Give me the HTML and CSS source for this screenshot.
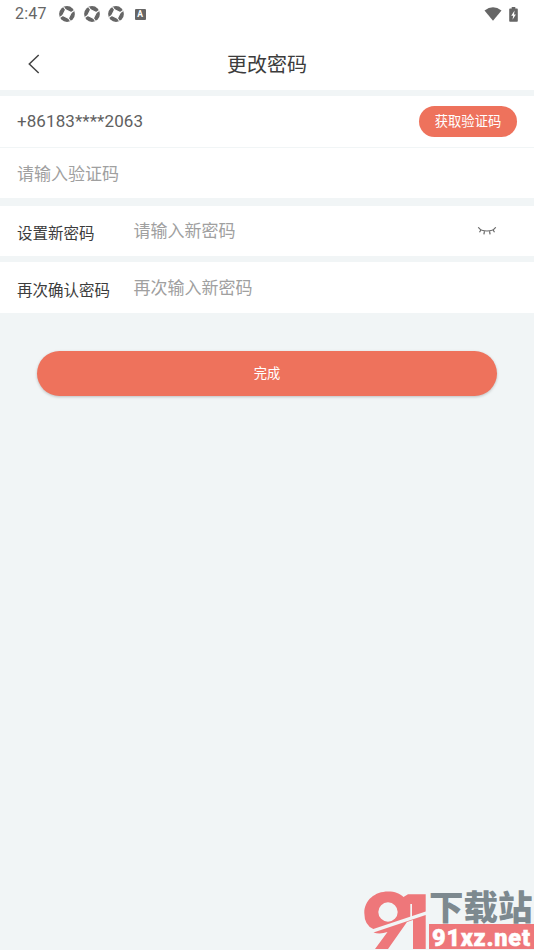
FILE: index.html
```html
<!DOCTYPE html>
<html lang="zh-CN">
<head>
<meta charset="UTF-8">
<title>更改密码</title>
<link rel="stylesheet" href="styles.css">
</head>
<body>
<div class="status">
  <span class="time">2:47</span>
  <svg class="ball" viewBox="0 0 16 16"><use href="#ball"/></svg>
  <svg class="ball" viewBox="0 0 16 16"><use href="#ball"/></svg>
  <svg class="ball" viewBox="0 0 16 16"><use href="#ball"/></svg>
  <span class="badge">A</span>
  <svg class="wifi" viewBox="0 0 18 14"><path d="M.5 3.6Q9-3 17.5 3.6L9 13.8Z"/></svg>
  <svg class="battery" viewBox="0 0 9 15"><path d="M2.700 0h3.600v1.600H8q.8 0 .8.8V14q0 .8-.8.8H1q-.8 0-.8-.8V2.400q0-.8.8-.8h1.700Z"/><path class="bolt" d="M5.600 3.500 2.200 8.700h2l-.7 4L6.900 7.500H5Z"/></svg>
  <svg class="defs"><defs><g id="ball"><circle cx="8" cy="8" r="7.900"/><path d="M6.500 3.500 12.500 6.500 9.500 12.500 3.500 9.500Z" fill="#fff" stroke="#fff" stroke-width=".8"/><path d="M7 4.500 4.500.8M11.500 7 15.200 4.500M9 11.500 11.500 15.200M4.500 9 .8 11.500" stroke="#fff" stroke-width="1.100"/></g></defs></svg>
</div>
<header class="header">
  <svg class="back" viewBox="0 0 12 20"><path d="M10.700 1 1.300 10l9.400 9"/></svg>
  <h1>更改密码</h1>
</header>
<main>
  <section class="row phone"><span>+86183****2063</span><button class="code">获取验证码</button></section>
  <section class="row verify"><span class="hint">请输入验证码</span></section>
  <section class="row create"><label>设置新密码</label><span class="hint">请输入新密码</span>
    <svg class="eye" viewBox="0 0 20 10"><path d="M1.300 1.200Q3.500 5 10 5T18.700 1.200M4.200 3.500 2.500 6.200M7.500 5l-.6 3.300M12.500 5l.6 3.300M15.800 3.500l1.700 2.700"/></svg>
  </section>
  <section class="row confirm"><label>再次确认密码</label><span class="hint">再次输入新密码</span></section>
  <button class="done">完成</button>
</main>
<div class="watermark">
  <svg class="mark" viewBox="0 0 62 59">
    <path fill-rule="evenodd" d="M.3 22C.3 9 11 .5 24 .5c7 0 12 2 15.500 5.500L44 3.300h17.700v17.200L9.300 38Q.3 34 .3 22ZM14.300 21a9.700 9.700 0 1 0 19.400 0a9.700 9.700 0 1 0-19.400 0Z"/>
    <path d="M9.500 41.500 61.700 24V58H49V29L43 31 24 58H11L23.500 41Q16 43.500 9.500 41.500Z"/>
    <path class="cut" d="M46.300 13h1.700v15h-1.700Z"/>
  </svg>
  <div class="site">
    <div class="station">下载站</div>
    <div class="domain"><svg viewBox="0 0 105 25"><text x="3" y="21.500" textLength="98" lengthAdjust="spacing">91xz.net</text></svg></div>
  </div>
</div>
</body>
</html>
```
FILE: styles.css
```css
* { box-sizing: border-box; }
body { margin: 0; height: 950px; overflow: hidden; background: #f1f5f6; color: #3c3c3c; font-family: Roboto, "Noto Sans CJK SC", sans-serif; }
button { border: 0; padding: 0 0 1px; color: #fff; background: #ee725c; font-family: inherit; }
.status { height: 28px; display: flex; align-items: center; padding: 0 15px; background: #fff; color: #666; }
.time { width: 44px; font-size: 16px; line-height: 28px; letter-spacing: .2px; }
.ball { width: 16px; height: 16px; margin-right: 8.500px; fill: #666; }
.badge { width: 11px; height: 11px; margin-left: 2px; border-radius: 1px; background: #666; color: #fff; font-size: 8.500px; font-weight: 700; line-height: 11px; text-align: center; }
.wifi { width: 18px; height: 14px; margin-left: auto; margin-right: 7px; fill: #666; }
.battery { width: 9px; height: 15px; margin-right: 1px; fill: #666; }
.battery .bolt { fill: #fff; }
.defs { width: 0; height: 0; }
.header { height: 62px; display: grid; grid-template-columns: 60px 1fr 60px; align-items: center; background: #fff; padding-top: 10px; }
.back { width: 12px; height: 20px; margin-left: 28px; fill: none; stroke: #444; stroke-width: 1.500; }
h1 { margin: 0; padding-top: 2px; font-size: 20px; line-height: 30px; font-weight: 400; text-align: center; }
main { display: flex; flex-direction: column; padding-top: 6px; }
.row { display: flex; align-items: center; height: 51px; padding: 0 17px; background: #fff; font-size: 17px; line-height: 26px; }
.phone { color: #606060; justify-content: space-between; padding-bottom: 1px; letter-spacing: .08px; }
.code { width: 98px; height: 31px; border-radius: 16px; font-size: 13.300px; letter-spacing: 0; }
.hint { color: #a0a0a0; padding-top: 2px; }
.verify { margin-top: 1px; height: 50px; }
.create { margin-top: 7.500px; height: 50.500px; }
.create .hint { padding-top: 1px; }
.confirm { margin-top: 6px; height: 50.500px; }
label { width: 116.500px; margin-top: 7px; font-size: 15.500px; line-height: 18px; }
.eye { width: 20px; height: 10px; margin-left: auto; margin-right: 20px; fill: none; stroke: #666; stroke-width: 1.200; }
.done { width: 460px; height: 44.500px; margin: 38.500px auto 0; border-radius: 23px; font-size: 13.300px; box-shadow: 0 1px 3px rgb(0 0 0 / 22%); }
.watermark { position: absolute; left: 364px; top: 891px; width: 170px; height: 59px; display: flex; gap: 3px; }
.mark { width: 62px; height: 59px; fill: #ee777a; }
.mark .cut { fill: #f1f5f6; }
.site { width: 105px; }
.station { height: 33px; color: #7d898f; font: 900 34.500px/29px "Noto Sans CJK SC", sans-serif; white-space: nowrap; }
.domain { height: 25px; background: #ee777a; }
.domain svg { display: block; width: 105px; height: 25px; }
.domain text { font: 900 23.500px Roboto, sans-serif; fill: #fff; stroke: #fff; stroke-width: .5px; }
```
